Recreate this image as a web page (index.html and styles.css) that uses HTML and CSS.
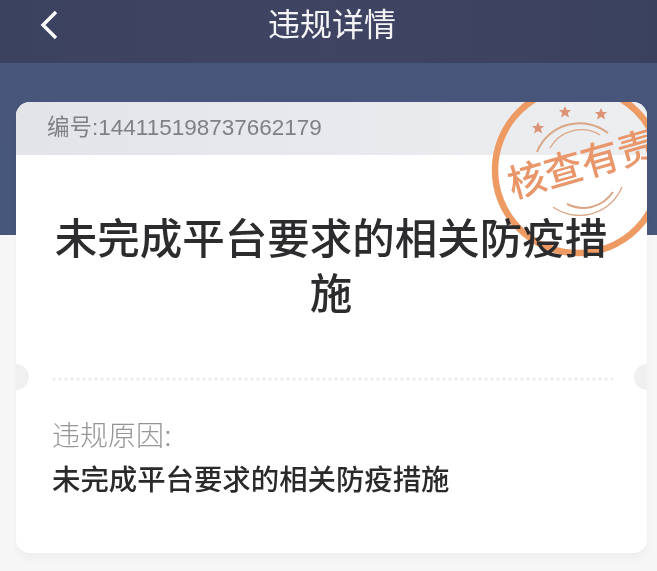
FILE: index.html
```html
<!DOCTYPE html>
<html lang="zh-CN">
<head>
<meta charset="utf-8">
<title>违规详情</title>
<link rel="stylesheet" href="styles.css">
</head>
<body>
<div class="page">
  <header class="nav">
    <svg class="back" width="20" height="30" viewBox="0 0 20 30"><path d="M17 2 L4 15 L17 28" fill="none" stroke="#fff" stroke-width="3.4"/></svg>
    <h1 class="nav-title">违规详情</h1>
  </header>
  <main class="card">
    <div class="card-clip">
      <div class="code-bar">编号:144115198737662179</div>
      <svg class="stamp" width="200" height="200" viewBox="0 0 200 200">
        <circle cx="100" cy="98" r="83" fill="none" stroke="#ee9a63" stroke-width="6.500"/>
        <g fill="#dc9274">
          <polygon points="60,50 61.800,54 66,54 62.800,57 64,61.500 60,59 56,61.500 57.200,57 54,54 58.200,54"/>
          <polygon points="87,34 88.800,38 93,38 89.800,41 91,45.500 87,43 83,45.500 84.200,41 81,38 85.200,38"/>
          <polygon points="123,36 124.800,40 129,40 125.800,43 127,47.500 123,45 119,47.500 120.200,43 117,40 121.200,40"/>
        </g>
        <g fill="none" stroke="#dba686" stroke-width="1.300">
          <path d="M59 80 A46 46 0 0 1 130 61" stroke-width="2"/>
          <path d="M72 76 A36 36 0 0 1 122 63"/>
          <path d="M144 115 A46 46 0 0 1 75 135"/>
          <path d="M135 120 A36 36 0 0 1 89 132" stroke-width="2"/>
        </g>
        <text class="stamp-text" x="104" y="106" text-anchor="middle" transform="rotate(-16 104 93)">核查有责</text>
      </svg>
      <h2 class="headline">未完成平台要求的相关防疫措施</h2>
      <div class="divider"></div>
      <section class="reason">
        <div class="reason-label">违规原因:</div>
        <div class="reason-text">未完成平台要求的相关防疫措施</div>
      </section>
      <span class="notch notch-left"></span>
      <span class="notch notch-right"></span>
    </div>
  </main>
</div>
</body>
</html>
```
FILE: styles.css
```css
* { box-sizing: border-box; }
html, body { margin: 0; padding: 0; }
body {
  width: 657px;
  height: 571px;
  overflow: hidden;
  font-family: "Liberation Sans", "Noto Sans CJK SC", sans-serif;
}
.page {
  height: 571px;
  padding-bottom: 18px;
  background: linear-gradient(#47557a 0, #47567b 235px, #f6f6f6 235px);
  filter: blur(0.5px);
}
.nav {
  position: relative;
  height: 63px;
  display: flex;
  align-items: center;
  justify-content: center;
  background: linear-gradient(90deg, #3b4260, #3f4462 50%, #3a415f);
}
.back { position: absolute; left: 39px; top: 10px; }
.nav-title {
  margin: 0 0 14px 7px;
  font-size: 32px;
  font-weight: 400;
  line-height: 46px;
  color: #f4f4f6;
}
.card {
  position: relative;
  width: 631px;
  height: 451px;
  margin: 39px 10px 0 16px;
  border-radius: 14px;
  box-shadow: 0 6px 6px rgba(0, 0, 0, 0.03);
}
.card-clip {
  position: relative;
  height: 100%;
  overflow: hidden;
  border-radius: 14px;
  background: #fff;
}
.code-bar {
  height: 53px;
  padding: 8px 0 0 31px;
  background: linear-gradient(90deg, #e3e4e8, #eceef0);
  color: #7f8085;
  font-size: 22.500px;
  line-height: 36px;
}
.stamp { position: absolute; left: 462px; top: -30px; }
.stamp-text {
  font-size: 38px;
  font-weight: 500;
  font-family: "Noto Sans CJK SC", sans-serif;
  fill: #e8966a;
}
.headline {
  position: relative;
  width: 560px;
  margin: 57px 0 0 35px;
  font-size: 42.500px;
  font-weight: 500;
  line-height: 55px;
  text-align: center;
  color: #2c2c2e;
}
.divider {
  margin: 55px 34px 0 36px;
  height: 4px;
  background: radial-gradient(circle at 2px 2px, #ececec 1.300px, transparent 1.800px) 0 0 / 6px 4px repeat-x;
}
.reason { padding: 36px 0 0 36px; }
.reason-label {
  font-size: 28px;
  line-height: 40px;
  font-weight: 300;
  color: #959595;
}
.reason-text {
  margin-top: 3px;
  font-size: 28.400px;
  line-height: 40px;
  font-weight: 500;
  color: #2a2a2c;
}
.notch {
  position: absolute;
  top: 262px;
  width: 26px;
  height: 26px;
  border-radius: 50%;
  background: #f0f0f0;
}
.notch-left { left: -13px; }
.notch-right { right: -13px; }
```
